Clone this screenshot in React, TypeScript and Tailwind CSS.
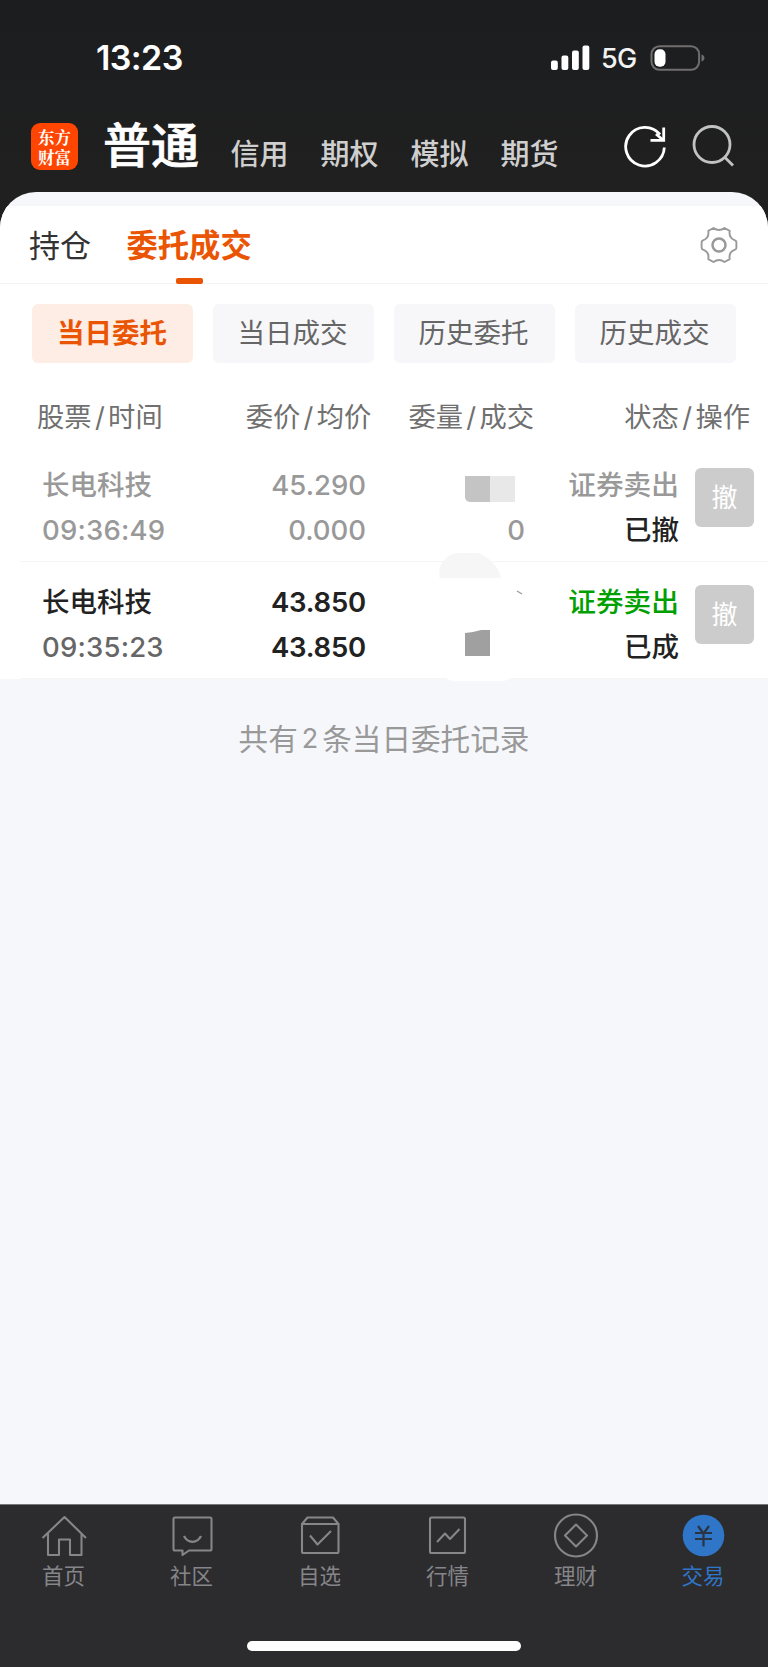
import type { ReactNode } from "react";

const markets = ["信用", "期权", "模拟", "期货"];
const filters = ["当日委托", "当日成交", "历史委托", "历史成交"];

function StatusBar() {
    return (
        <div className="flex h-[115px] items-center justify-between pl-[96px] pr-[63px]">
            <span className="text-[34px] font-semibold leading-[34px] tracking-[-0.6px] text-white">13:23</span>
            <div className="flex items-center">
                <svg className="h-[26px] w-[40px]" viewBox="0 0 40 26" fill="#fff">
                    <rect x="0" y="15.500" width="6.800" height="9.500" rx="2" />
                    <rect x="10.500" y="10.500" width="6.800" height="14.500" rx="2" />
                    <rect x="21" y="5.500" width="6.800" height="19.500" rx="2" />
                    <rect x="31.500" y="0.500" width="6.800" height="24.500" rx="2" />
                </svg>
                <span className="ml-[10px] mt-[2px] w-[37px] text-[27px] font-medium leading-[30px] tracking-[-0.8px] text-[#f2f2f2]">5G</span>
                <svg className="ml-[12px] h-[26px] w-[55px]" viewBox="0 0 55 26" fill="none">
                    <rect x="1.500" y="1.200" width="47.600" height="23.600" rx="8" stroke="#706e6e" strokeWidth="2" />
                    <rect x="4.500" y="4.200" width="11" height="17.500" rx="5" fill="#fff" />
                    <path d="M51.500 9.500c2 .6 3 2 3 3.500s-1 2.900-3 3.500z" fill="#706e6e" />
                </svg>
            </div>
        </div>
    );
}

function Header() {
    return (
        <div className="flex h-[77px] pl-[31px] pr-[34px]">
            <div className="mt-[8px] flex h-[47px] w-[47px] flex-col items-center justify-center rounded-[9px] bg-[#ff4500] font-[Noto_Serif_CJK_SC,Noto_Sans_CJK_SC,serif] text-[16.5px] font-bold leading-[20px] text-white">
                <span>东方</span>
                <span>财富</span>
            </div>
            <h1 className="ml-[25px] mt-[5px] text-[48px] font-medium leading-[52px] text-white [-webkit-text-stroke:0.7px_#fff]">普通</h1>
            <div className="ml-[31.5px] mt-[24px] flex gap-[32px]">
                {markets.map((name) => (
                    <span key={name} className="text-[29px] font-medium leading-[32px] text-[#cfcfcf]">{name}</span>
                ))}
            </div>
            <div className="ml-auto mt-[9px] flex gap-[23px]">
                <svg className="h-[44px] w-[44px]" viewBox="0 0 44 44" fill="none" stroke="#fff" strokeWidth="2.800">
                    <path d="M41.300 23.500A19.300 19.300 0 1 1 37 10.500" />
                    <path d="M40.700 3.500V16.300H27.500" />
                    <path d="M33 10 40 16" />
                </svg>
                <svg className="h-[44px] w-[44px]" viewBox="0 0 44 44" fill="none" stroke="#c2c2c2" strokeWidth="2.800">
                    <circle cx="22" cy="20.500" r="18" />
                    <path d="M34.500 33 43 41.500" />
                </svg>
            </div>
        </div>
    );
}

function Tabs() {
    return (
        <div className="flex h-[78px] items-stretch border-b-[1.5px] border-[#f3f4f6] pl-[29px] pr-[30px]">
            <span className="pt-[23px] text-[31px] leading-[34px] text-[#333]">持仓</span>
            <div className="ml-[35.5px] flex flex-col items-center">
                <span className="pt-[23px] text-[31.3px] font-bold leading-[34px] text-[#ea5504]">委托成交</span>
                <span className="mt-[15px] h-[6px] w-[27px] shrink-0 rounded-[2px] bg-[#ea5504]" />
            </div>
            <svg className="ml-auto mt-[20px] h-[38px] w-[38px]" viewBox="0 0 38 38" fill="none" stroke="#999" strokeWidth="1.900" strokeLinejoin="round">
                <path d="M13.500 2Q19 6 24.500 2L29.700 4.900Q28.500 12 35 14.300Q36.400 14.800 36.400 16.300V21.700Q36.400 23.200 35 23.700Q28.500 26 29.700 33.100L24.500 36Q19 32 13.500 36L8.300 33.100Q9.500 26 3 23.700Q1.600 23.200 1.600 21.700V16.300Q1.600 14.800 3 14.300Q9.500 12 8.300 4.900Z" />
                <circle cx="19" cy="19" r="6.500" strokeWidth="2.500" />
            </svg>
        </div>
    );
}

function Filters() {
    return (
        <div className="grid grid-cols-4 gap-[20px] px-[32px] pt-[20px]">
            {filters.map((name, i) => (
                <div
                    key={name}
                    className={
                        i === 0
                            ? "flex h-[59px] items-center justify-center rounded-[6px] bg-[#fdede5] pr-[1px] text-[27.5px] font-bold text-[#ea5504]"
                            : "flex h-[59px] items-center justify-center rounded-[6px] bg-[#f7f7fa] pr-[2px] text-[27.5px] text-[#666]"
                    }
                >
                    {name}
                </div>
            ))}
        </div>
    );
}

function ColumnTitle({ left, right }: { left: string; right: string }) {
    return (
        <span className="flex text-[27.3px] leading-[32px] text-[#707070]">
            {left}
            <span className="w-[16.5px] text-center">/</span>
            {right}
        </span>
    );
}

function ListHeader() {
    return (
        <div className="flex h-[82px] pl-[37px] pr-[18px] pt-[39px]">
            <ColumnTitle left="股票" right="时间" />
            <div className="ml-[83px]"><ColumnTitle left="委价" right="均价" /></div>
            <div className="ml-[37px]"><ColumnTitle left="委量" right="成交" /></div>
            <div className="ml-auto"><ColumnTitle left="状态" right="操作" /></div>
        </div>
    );
}

type OrderProps = {
    time: string;
    price: string;
    average: string;
    state: string;
    done?: boolean;
    children: ReactNode;
};

function Order({ time, price, average, state, done, children }: OrderProps) {
    return (
        <div className="ml-[20px] flex h-[117px] border-b-[1.5px] border-[#f5f5f6] pl-[22px] pr-[14px] pt-[17.5px] text-[27.5px] font-medium leading-[45px]">
            <div className="w-[150px]">
                <div className={done ? "text-[#222]" : "text-[#999]"}>长电科技</div>
                <div className={done ? "tracking-[0.2px] text-[#666]" : "tracking-[0.2px] text-[#999]"}>{time}</div>
            </div>
            <div className={done ? "w-[174px] text-right font-semibold tracking-[-0.2px] text-[#222]" : "w-[174px] text-right text-[#999]"}>
                <div>{price}</div>
                <div>{average}</div>
            </div>
            <div className="relative w-[159px]">{children}</div>
            <div className="w-[154px] text-right">
                <div className={done ? "text-[27.7px] text-[#00a000]" : "text-[27.7px] text-[#999]"}>证券卖出</div>
                <div className="text-[#222]">{state}</div>
            </div>
            <div className="ml-auto mt-[5px] flex h-[59px] w-[59px] items-center justify-center rounded-[6px] bg-[#ccc] text-[26px] font-normal text-white">撤</div>
        </div>
    );
}

function TabItem({ label, active, children }: { label: string; active?: boolean; children: ReactNode }) {
    return (
        <div className="flex flex-1 flex-col items-center pt-[8px]">
            <svg
                className={active ? "h-[48px] w-[48px] text-[#2f76c8]" : "h-[48px] w-[48px] text-[#85858a]"}
                viewBox="0 0 48 48"
                fill="none"
                stroke="currentColor"
                strokeWidth="2.100"
                strokeLinejoin="round"
            >
                {children}
            </svg>
            <span className={active ? "mr-[2px] mt-[2px] text-[21.5px] leading-[26px] text-[#2f76c8]" : "mr-[1px] mt-[2px] text-[21.5px] leading-[26px] text-[#85858a]"}>
                {label}
            </span>
        </div>
    );
}

function TabBar() {
    return (
        <div className="flex h-[163px] flex-col border-t border-[#77787a] bg-[#2c2c2e]">
            <div className="flex">
                <TabItem label="首页">
                    <path d="M2.500 25 24.500 4 46 25M8 20.500V42H19V26.500H30V42H41.500V20.500" />
                </TabItem>
                <TabItem label="社区">
                    <path d="M7 4.500H42Q43.500 4.500 43.500 6V36Q43.500 37.500 42 37.500H21L14.500 42V37.500H7Q5.500 37.500 5.500 36V6Q5.500 4.500 7 4.500Z" />
                    <path d="M16 23Q19 28.800 24.500 28.800T33 23" strokeWidth="2.300" />
                </TabItem>
                <TabItem label="自选">
                    <path d="M11.500 4.500H37L42.500 11V38.500Q42.500 40 41 40H7.500Q6 40 6 38.500V11ZM6 11H42.500" />
                    <path d="M14 22.500 21.500 31.500 35 18" />
                </TabItem>
                <TabItem label="行情">
                    <rect x="6" y="4.500" width="35" height="35.500" rx="1.500" />
                    <path d="M13 29 21 20.500 26 26 35.500 16" />
                </TabItem>
                <TabItem label="理财">
                    <circle cx="24" cy="22.500" r="21" />
                    <path d="M24 11.500 35 22.500 24 33.500 13 22.500Z" />
                </TabItem>
                <TabItem label="交易" active>
                    <circle cx="23.500" cy="22.500" r="20.800" fill="currentColor" stroke="none" />
                    <path d="M18 13 23.500 20.500 29 13M23.500 19.500V33.500M15 20H32M15 26H32" stroke="#2a3442" strokeWidth="2.200" />
                </TabItem>
            </div>
            <div className="mb-[16px] mt-auto h-[10px] w-[274px] self-center rounded-full bg-white" />
        </div>
    );
}

export default function App() {
    return (
        <div className="flex h-[1667px] w-[768px] flex-col bg-[#202020] font-[Inter,Noto_Sans_CJK_SC,sans-serif]">
            <div className="bg-linear-to-b from-[#1c1d1f] to-[#202020]">
                <StatusBar />
                <Header />
            </div>
            <div className="flex-1 overflow-hidden rounded-t-[36px] bg-[#f6f7fa] pt-[14px]">
                <div className="bg-white">
                    <Tabs />
                    <Filters />
                    <ListHeader />
                    <Order time="09:36:49" price="45.290" average="0.000" state="已撤">
                        <div className="absolute left-[99px] top-[13px] flex">
                            <div className="h-[26px] w-[25px] rounded-bl-[5px] bg-[#c4c4c4]" />
                            <div className="h-[26px] w-[25px] bg-[#e8e8e8]" />
                        </div>
                        <div className="pt-[45px] text-right text-[#999]">0</div>
                    </Order>
                    <Order done time="09:35:23" price="43.850" average="43.850" state="已成">
                        {/* leftovers of the brush strokes that hide the volume */}
                        <svg className="absolute left-[70px] top-[-27.5px] h-[132px] w-[90px]" viewBox="0 0 90 132">
                            <path d="M3.500 26V17Q8 3 21 1H42Q61 9 65 26Z" fill="#f6f6f6" />
                            <path d="M81 39 86 42" stroke="#999" strokeWidth="1.200" />
                            <path d="M29 81 37 80 45 78H54V104H29Z" fill="#a0a0a0" />
                            <path d="M10 126H76L68 129H16Z" fill="#fff" />
                        </svg>
                    </Order>
                </div>
                <div className="flex justify-center pt-[42px] text-[29.6px] leading-[36px] text-[#999]">
                    共有<span className="mx-[4px] text-[27px]">2</span>条当日委托记录
                </div>
            </div>
            <TabBar />
        </div>
    );
}
